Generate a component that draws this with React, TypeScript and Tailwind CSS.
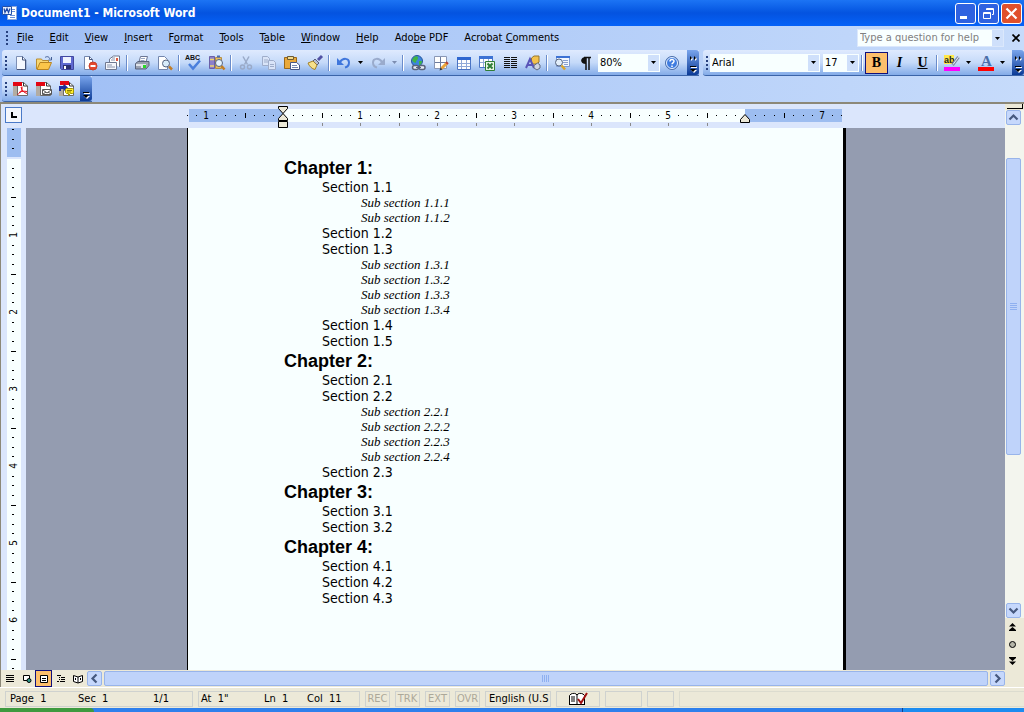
import type { ReactNode } from "react";

const menus = [
    ["", "F", "ile"],
    ["", "E", "dit"],
    ["", "V", "iew"],
    ["", "I", "nsert"],
    ["F", "o", "rmat"],
    ["", "T", "ools"],
    ["T", "a", "ble"],
    ["", "W", "indow"],
    ["", "H", "elp"],
    ["Ado", "b", "e PDF"],
    ["Acrobat ", "C", "omments"],
];

const outline = [
    {
        title: "Chapter 1:",
        sections: [
            { title: "Section 1.1", subs: ["1.1.1", "1.1.2"] },
            { title: "Section 1.2", subs: [] },
            { title: "Section 1.3", subs: ["1.3.1", "1.3.2", "1.3.3", "1.3.4"] },
            { title: "Section 1.4", subs: [] },
            { title: "Section 1.5", subs: [] },
        ],
    },
    {
        title: "Chapter 2:",
        sections: [
            { title: "Section 2.1", subs: [] },
            { title: "Section 2.2", subs: ["2.2.1", "2.2.2", "2.2.3", "2.2.4"] },
            { title: "Section 2.3", subs: [] },
        ],
    },
    {
        title: "Chapter 3:",
        sections: [
            { title: "Section 3.1", subs: [] },
            { title: "Section 3.2", subs: [] },
        ],
    },
    {
        title: "Chapter 4:",
        sections: [
            { title: "Section 4.1", subs: [] },
            { title: "Section 4.2", subs: [] },
            { title: "Section 4.3", subs: [] },
        ],
    },
];

/* ---------- icons ---------- */

const Icon = ({ children }: { children: ReactNode }) => (
    <svg viewBox="0 0 16 16" className="w-4 h-4 shrink-0 overflow-visible" fill="none">
        {children}
    </svg>
);

const pdfPage = (
    <>
        <path d="M0 5h12v10H0z" fill="#b2aca3" />
        <path d="M4.5 1.5h6l4 3.5v9.5h-10z" fill="#fff" stroke="#6b6b6b" />
        <path d="M10.5 1.5V5h4" stroke="#333" />
    </>
);

const icons = {
    New: (
        <>
            <path d="M3.5 1.5h6L13 5v9.5H3.5z" fill="#f4f8ff" stroke="#7d8fb5" />
            <path d="M9.5 1.5V5H13" stroke="#44557c" />
            <path d="M12.5 5v9.5H4" stroke="#44557c" />
        </>
    ),
    Open: (
        <>
            <path d="M.5 14V4h5l1 1.5h6V8" fill="#f7d774" stroke="#b98d30" />
            <path d="M1 14.5 4 7.5h11.5l-3 7z" fill="#fbc64a" stroke="#b98522" />
            <path d="M9 2.5c2-1.5 4-1 5 1.5M15.5 2v3h-3" stroke="#445f95" />
        </>
    ),
    Save: (
        <>
            <path d="M1.5 1.5h13v13h-12l-1-1z" fill="#5f69d0" stroke="#4147a0" />
            <path d="M4 2h8v6H4z" fill="#eef2ff" />
            <path d="M4 10h8v4H4z" fill="#2c2f70" />
            <path d="M5 11h2v3H5z" fill="#fff" />
        </>
    ),
    Permission: (
        <>
            <path d="M2.5 1.5h5l3 3v10h-8z" fill="#fff" stroke="#7386ad" />
            <path d="M7.500 1.5v3h3" stroke="#44557c" />
            <circle cx="11" cy="11" r="4" fill="#e5482d" stroke="#c8402a" />
            <path d="M8.5 10h5v2h-5z" fill="#fff" />
        </>
    ),
    "E-mail": (
        <>
            <path d="M4.500 7V4l4-3h6v11" fill="#fff" stroke="#6f7890" />
            <path d="M11 3h2v3h-2z" fill="#e0563c" />
            <path d="M6 5h4M7 3h3" stroke="#8a94ac" />
            <path d="M.5 7.5h11v7H.5z" fill="#f5f7fc" stroke="#6f7890" />
            <path d="M2 10h5M2 12h8" stroke="#8a94ac" />
        </>
    ),
    Print: (
        <>
            <path d="M5 7l1.5-5.5h7L12 7" fill="#fff" stroke="#6b7694" />
            <path d="M7 3.5h4M6.500 5.500h4" stroke="#9aa6c4" />
            <path d="M1.5 8.5 4 6.5h11v4l-3 3.500H1.500z" fill="#9aa2b2" stroke="#59637c" />
            <path d="M2 9h10v4H2z" fill="#dfe3ea" />
            <path d="M9 10h3v3H9z" fill="#28d828" />
            <path d="M2 12h5" stroke="#59637c" />
        </>
    ),
    "Print Preview": (
        <>
            <path d="M1.5 1.5h6l3 3v10h-9z" fill="#fff" stroke="#7386ad" />
            <circle cx="9" cy="8.5" r="3.5" fill="#d8ecfa" stroke="#56647f" />
            <path d="m12 11.5 3 3" stroke="#c27d27" strokeWidth="2.500" />
        </>
    ),
    Spelling: (
        <>
            <text x="-1" y="5" fontSize="7" fontWeight="700" fill="#111" fontFamily="Liberation Sans, sans-serif">ABC</text>
            <path d="m3 9 4 4.5L14 5.500" stroke="#4a7fdc" strokeWidth="2.500" />
        </>
    ),
    Research: (
        <>
            <path d="M.5 1.5h5v12h-5z" fill="#8c80cc" stroke="#6a60a8" />
            <path d="M1 4.500h4M1 11h4" stroke="#efd56d" strokeWidth="1.500" />
            <path d="M6.5 2.5h6v11h-6z" fill="#e7bd62" stroke="#b58f45" />
            <path d="M8 1.500h3" stroke="#4a6cb4" strokeWidth="2" />
            <circle cx="10" cy="8" r="3.500" fill="#e6f3fc" stroke="#56647f" />
            <path d="m12.500 11 3 3.500" stroke="#c27d27" strokeWidth="2.500" />
        </>
    ),
    Cut: (
        <>
            <path d="m5 1.500 4.500 8M11 1.500l-4.500 8" stroke="#9aaac8" strokeWidth="1.500" />
            <circle cx="4.500" cy="12" r="2" stroke="#9aaac8" strokeWidth="1.500" />
            <circle cx="11.500" cy="12" r="2" stroke="#9aaac8" strokeWidth="1.500" />
        </>
    ),
    Copy: (
        <>
            <path d="M1.500 1.500h5l2 2v7h-7z" fill="#d9e4f8" stroke="#9fadca" />
            <path d="M3 5h4M3 7h4" stroke="#9fadca" />
            <path d="M7.500 5.500h5l2 2v7h-7z" fill="#d9e4f8" stroke="#9fadca" />
            <path d="M9 9.500h4M9 11.500h4" stroke="#9fadca" />
        </>
    ),
    Paste: (
        <>
            <path d="M.5 2.500h12v11H.5z" fill="#eaa93a" stroke="#99671b" />
            <path d="M3.500 1.500h6v3h-6z" fill="#f6dc8a" stroke="#6b5a34" />
            <path d="M6.500 7.500h6l3 2.500v4.500h-9z" fill="#fff" stroke="#46598a" />
            <path d="M8 10.500h5M8 12.500h6" stroke="#7386ad" />
        </>
    ),
    "Format Painter": (
        <>
            <path d="m15 1-4 4" stroke="#5252a4" strokeWidth="3" />
            <path d="M8 4l4 4-2 2-4-4z" fill="#b7bccc" stroke="#575f80" />
            <path d="M6 6 1 8c1 3 4 6 7 6.500L10 10z" fill="#f6e08a" stroke="#a3812a" />
        </>
    ),
    Undo: (
        <>
            <path d="M4 7c3-4.500 9-4 9 .5 0 2.500-2 4.500-4 5" stroke="#3f76dc" strokeWidth="2" />
            <path d="M1 3v7h7z" fill="#3f76dc" />
        </>
    ),
    Redo: (
        <>
            <path d="M12 7c-3-4.500-9-4-9 .5 0 2.500 2 4.500 4 5" stroke="#9aabcc" strokeWidth="2" />
            <path d="M15 3v7H8z" fill="#9aabcc" />
        </>
    ),
    "Insert Hyperlink": (
        <>
            <circle cx="7" cy="6" r="5.500" fill="#3c86dc" stroke="#28569c" />
            <path d="M4 2c2-1 4-1 4 1S6 5 6 7 3 7 2 5zM9 6h3c0 2-1 4-3 4z" fill="#3fb544" />
            <rect x="2.500" y="10.500" width="6" height="4" rx="2" fill="#e8edf6" stroke="#59637c" strokeWidth="1.500" />
            <rect x="9" y="10.500" width="6" height="4" rx="2" fill="#e8edf6" stroke="#59637c" strokeWidth="1.500" />
            <path d="M6 12.500h5" stroke="#59637c" />
        </>
    ),
    "Tables and Borders": (
        <>
            <path d="M1.500 1.500h12v12h-12z" fill="#fff" stroke="#8a97b5" />
            <path d="M7.500 2v11M2 7.500h11" stroke="#6d7c9e" />
            <path d="m8.500 13.500 5.500-5.500" stroke="#e9a43b" strokeWidth="3" />
            <path d="m6.500 15.500 1-3 2 2z" fill="#333" />
            <path d="m13 7 2 2" stroke="#b63f32" strokeWidth="2" />
        </>
    ),
    "Insert Table": (
        <>
            <path d="M1.500 2.500h13v12h-13z" fill="#fff" stroke="#4b74c4" />
            <path d="M1 2h14v3H1z" fill="#2f66cf" />
            <path d="M5.500 5v9M10.500 5v9M2 8.500h12M2 11.500h12" stroke="#90a9d8" />
        </>
    ),
    "Insert Excel Worksheet": (
        <>
            <path d="M.500 1.500h13v11H.500z" fill="#fff" stroke="#4b74c4" />
            <path d="M0 1h14v3H0z" fill="#3d72d4" />
            <path d="M4.500 4v8M9.500 4v8M1 7.500h12" stroke="#90a9d8" />
            <path d="M6.500 6.500h9v9h-9z" fill="#e8f5e4" stroke="#2f7d36" />
            <path d="m8.500 8.500 5 5M13.500 8.500l-5 5" stroke="#2f7d36" strokeWidth="2" />
        </>
    ),
    Columns: (
        <path d="M2 2.500h6M9 2.500h6M2 4.500h6M9 4.500h6M2 6.500h6M9 6.500h6M2 8.500h6M9 8.500h6M2 10.500h6M9 10.500h6M2 12.500h6M9 12.500h6" stroke="#111" />
    ),
    Drawing: (
        <>
            <path d="M6.500 3 9 1h5v6l-2 2H6.500z" fill="#f3c24d" stroke="#97772c" />
            <path d="m1 13 4-9 4 9M3 10h4" stroke="#5a55b8" strokeWidth="2" />
            <path d="M9 10.500 12.500 8 15 10v3l-3 2-3-2z" fill="#cfd5e2" stroke="#5f6880" />
        </>
    ),
    "Document Map": (
        <>
            <path d="M2.500 1.500h13v10h-13z" fill="#f2f7ff" stroke="#7f9bd2" />
            <path d="M2 1h14v2H2z" fill="#3d72d4" />
            <path d="M9 5.500h5M9 7.500h5M10 9.500h4" stroke="#8aa0cf" />
            <circle cx="5" cy="7.500" r="3.500" fill="#e2eefb" stroke="#56647f" />
            <path d="m7.500 10.500 3.500 4" stroke="#d9a52e" strokeWidth="2.500" />
        </>
    ),
    "Show/Hide": (
        <>
            <path d="M7 2.500h7M9 2v13M12 2v13" stroke="#111" strokeWidth="1.500" />
            <path d="M9 2v7C2.500 9 2.500 2 9 2z" fill="#111" />
        </>
    ),
    Help: (
        <>
            <circle cx="8" cy="8" r="6.500" fill="#3f7ce0" stroke="#5070a8" />
            <circle cx="8" cy="8" r="5.500" stroke="#e9f2ff" />
            <path d="M6 6.500C6 4 10 4 10 6.300c0 1.500-2 1.500-2 3M8 10.500V12" stroke="#fff" strokeWidth="1.500" />
        </>
    ),
    "Convert to PDF": (
        <>
            {pdfPage}
            <path d="M0 1h9v4H0z" fill="#e30613" />
            <path d="M8 6c1 4 3 5.500 6 6.500M9 5.500c.5 4-2 6.500-4.500 8M6 11.500c3-1.500 5-1.500 8-1" stroke="#e30613" />
        </>
    ),
    "Convert to PDF and E-mail": (
        <>
            {pdfPage}
            <path d="M0 1h9v4H0z" fill="#e30613" />
            <path d="M6.500 8.500h9v5h-9z" fill="#fff" stroke="#555" />
            <path d="m7 9 4 3 4-3M7 13l3-2M15 13l-3-2" stroke="#555" />
        </>
    ),
    "Convert to PDF and Review": (
        <>
            {pdfPage}
            <path d="M1 0h9v4H1z" fill="#e30613" />
            <path d="M0 5h5V3l4 3.500L5 10V8H2v2H0z" fill="#1a2f9c" />
            <path d="M7.500 7.500h6l1 1v3l-1 1h-2l-2 2v-2h-2l-1-1v-3z" fill="#ffee2e" stroke="#a39600" />
            <path d="M8 9.500h5M8 11h4" stroke="#8d8100" />
        </>
    ),
    Highlight: (
        <>
            <path d="M0 0h10v9H0z" fill="#ffe84a" />
            <text x="0" y="8" fontSize="9" fontWeight="700" fill="#222" fontFamily="Liberation Sans, sans-serif">ab</text>
            <path d="m8.500 10 6-8" stroke="#7d89a5" strokeWidth="3" />
            <path d="m9 9.500 5.500-7.500" stroke="#e8edf8" />
            <path d="M0 12h16v4H0z" fill="#ff00ff" />
        </>
    ),
    "Font Color": (
        <>
            <text x="3" y="11" fontSize="15" fontWeight="700" fill="#4a6ea8" fontFamily="Liberation Serif, serif">A</text>
            <path d="M0 12h16v4H0z" fill="#ff0000" />
        </>
    ),
};

type IconName = keyof typeof icons;

const ToolButton = ({ name }: { name: IconName }) => (
    <button aria-label={name} className="w-[23px] h-[22px] flex items-center justify-center shrink-0">
        <Icon>{icons[name]}</Icon>
    </button>
);

const ToolGroup = ({ names }: { names: IconName[] }) => (
    <>
        {names.map((name) => (
            <ToolButton key={name} name={name} />
        ))}
    </>
);

const Down = ({ color = "#000" }: { color?: string }) => (
    <svg viewBox="0 0 5 3" className="w-[5px] h-[3px]">
        <path d="M0 0h5L2.500 3z" fill={color} />
    </svg>
);

const DownButton = ({ label, color }: { label: string; color?: string }) => (
    <button aria-label={label} className="w-[11px] h-[22px] flex items-center justify-center shrink-0">
        <Down color={color} />
    </button>
);

const Separator = () => (
    <div className="w-[6px] h-4 flex justify-center shrink-0">
        <div className="w-px bg-[#6a8ccb]" />
        <div className="w-px bg-white" />
    </div>
);

const Grip = () => (
    <div className="w-[7px] pl-px shrink-0 flex flex-col items-center gap-[2px]">
        {[0, 1, 2, 3].map((i) => (
            <span key={i} className="w-[2px] h-[2px] bg-[#27417f]" />
        ))}
    </div>
);

const Combo = ({ label, value, className }: { label: string; value: string; className: string }) => (
    <div className={`relative h-[18px] shrink-0 bg-[#f8ffff] ${className}`}>
        <select aria-label={label} defaultValue={value} className="w-full h-full pl-[2px] pr-3 appearance-none bg-transparent outline-none">
            <option>{value}</option>
        </select>
        <span className="absolute right-px top-px bottom-px w-[11px] bg-[#cfe0fb] flex items-center justify-center pointer-events-none">
            <Down />
        </span>
    </div>
);

const MoreButton = ({ chevrons = true }: { chevrons?: boolean }) => (
    <button aria-label="Toolbar Options" className="w-3 self-stretch shrink-0 rounded-r-[3px] bg-gradient-to-b from-[#7aa5ec] to-[#0a3a96] flex flex-col items-center justify-end pb-[2px]">
        <svg viewBox="0 0 9 18" className="w-[9px] h-[18px]" fill="none">
            {chevrons && <path d="M2 2v4l2-2zM6 2v4l2-2z" fill="#fff" />}
            {chevrons && <path d="M1 1v4l2-2zM5 1v4l2-2z" fill="#000" />}
            <path d="M2 12.500h6" stroke="#fff" />
            <path d="M1 11.500h6" stroke="#000" />
            <path d="M2 15h6l-3 3z" fill="#fff" />
            <path d="M1 14h6l-3 3z" fill="#000" />
        </svg>
    </button>
);

const toolbarBg = "bg-gradient-to-b from-[#dfeafe] via-[#c5daf9] to-[#83abe8] border-b border-[#3b64a8]";

/* ---------- window chrome ---------- */

const TitleBar = () => (
    <header className="h-[26px] shrink-0 flex items-center px-[2px] bg-gradient-to-b from-[#1c74f4] via-[#0453e0] to-[#0562f8]">
        <svg viewBox="0 0 16 16" className="w-4 h-4" fill="none">
            <path d="M5.500 1.500h9v13h-9z" fill="#fff" stroke="#8ba6dc" />
            <path d="M10 4.500h3M10 6.500h3M8 10.500h5M8 12.500h5" stroke="#6a8fd8" />
            <path d="M.500 1.500h9v8h-9z" fill="#e9f1ff" stroke="#2450a8" />
            <path d="m2 3.500 1 4 2-4 1.500 4L8 3.500" stroke="#1c47a8" strokeWidth="1.200" />
        </svg>
        <h1 className="ml-[3px] flex-1 text-[12px] font-bold text-white font-['DejaVu_Sans_Condensed','DejaVu_Sans',sans-serif]">Document1 - Microsoft Word</h1>
        <div className="flex gap-[2px]">
            <button aria-label="Minimize" className="w-[21px] h-[21px] rounded-[3px] border border-white bg-[#2f62e0]">
                <svg viewBox="0 0 19 19" fill="none"><path d="M4 13.500h7" stroke="#fff" strokeWidth="3" /></svg>
            </button>
            <button aria-label="Restore" className="w-[21px] h-[21px] rounded-[3px] border border-white bg-[#2f62e0]">
                <svg viewBox="0 0 19 19" fill="none" stroke="#fff">
                    <path d="M7.500 6V4.500h7v6H13M7 5.500h8" />
                    <path d="M4.500 8.500h7v6h-7zM4 9.500h8" />
                </svg>
            </button>
            <button aria-label="Close" className="w-[21px] h-[21px] rounded-[3px] border border-white bg-[#e0502c]">
                <svg viewBox="0 0 19 19" fill="none"><path d="m4.500 4.500 10 10M14.500 4.500l-10 10" stroke="#fff" strokeWidth="2.200" /></svg>
            </button>
        </div>
    </header>
);

const MenuBar = () => (
    <nav className="h-6 shrink-0 flex items-center pl-[3px] pr-px">
        <Grip />
        <div className="flex pl-px">
            {menus.map(([before, key, after]) => (
                <button key={before + key + after} className="pl-[6px] pr-[10px] whitespace-pre tabular-nums">
                    {before}
                    <u className="underline-offset-1">{key}</u>
                    {after}
                </button>
            ))}
        </div>
        <div className="ml-auto w-[147px] h-[18px] flex bg-[#f8ffff] border border-[#dbe8fc]">
            <input aria-label="Help search" placeholder="Type a question for help" className="min-w-0 flex-1 pl-[2px] outline-none placeholder:text-[#808080]" />
            <button aria-label="Recent questions" className="w-[11px] bg-[#cfe0fb] flex items-center justify-center">
                <Down />
            </button>
        </div>
        <button aria-label="Close Window" className="w-[15px] ml-1 flex items-center justify-center">
            <svg viewBox="0 0 8 8" className="w-2 h-2"><path d="m.5.5 7 7M7.500.5l-7 7" stroke="#000" strokeWidth="1.700" /></svg>
        </button>
    </nav>
);

const Toolbars = () => (
    <div className="shrink-0 flex flex-col">
        <div className="h-[26px] flex">
            <div className={`ml-[2px] flex items-center rounded-l-[3px] ${toolbarBg}`}>
                <Grip />
                <ToolGroup names={["New", "Open", "Save", "Permission", "E-mail"]} />
                <Separator />
                <ToolGroup names={["Print", "Print Preview"]} />
                <Separator />
                <ToolGroup names={["Spelling", "Research"]} />
                <Separator />
                <ToolGroup names={["Cut", "Copy", "Paste", "Format Painter"]} />
                <Separator />
                <ToolButton name="Undo" />
                <DownButton label="Undo list" />
                <ToolButton name="Redo" />
                <DownButton label="Redo list" color="#7c8db0" />
                <Separator />
                <ToolGroup names={["Insert Hyperlink", "Tables and Borders", "Insert Table", "Insert Excel Worksheet", "Columns", "Drawing"]} />
                <Separator />
                <ToolGroup names={["Document Map", "Show/Hide"]} />
                <Combo label="Zoom" value="80%" className="w-[62px] ml-[2px]" />
                <ToolButton name="Help" />
                <div className="ml-1 self-stretch flex">
                    <MoreButton />
                </div>
            </div>
            <div className={`ml-1 flex-1 flex items-center rounded-l-[3px] ${toolbarBg}`}>
                <Grip />
                <Combo label="Font" value="Arial" className="w-[110px]" />
                <Combo label="Font Size" value="17" className="w-9 ml-[3px]" />
                <Separator />
                <button aria-label="Bold" aria-pressed="true" className="w-[23px] h-[22px] border border-[#10107c] bg-[#fdbf6c] font-['Liberation_Serif',serif] text-[14px] font-bold">B</button>
                <button aria-label="Italic" className="w-[23px] h-[22px] font-['Liberation_Serif',serif] text-[14px] font-bold italic">I</button>
                <button aria-label="Underline" className="w-[23px] h-[22px] font-['Liberation_Serif',serif] text-[14px] font-bold underline">U</button>
                <Separator />
                <ToolButton name="Highlight" />
                <DownButton label="Highlight colors" />
                <ToolButton name="Font Color" />
                <DownButton label="Font colors" />
                <div className="ml-auto self-stretch flex">
                    <MoreButton />
                </div>
            </div>
        </div>
        <div className="h-[26px] flex">
            <div className={`ml-[2px] flex items-center rounded-l-[3px] ${toolbarBg}`}>
                <Grip />
                <ToolGroup names={["Convert to PDF", "Convert to PDF and E-mail", "Convert to PDF and Review"]} />
                <div className="ml-[2px] self-stretch flex">
                    <MoreButton chevrons={false} />
                </div>
            </div>
        </div>
    </div>
);

/* ---------- rulers ---------- */

const INCH = 77;

// eighth-inch marks, with a longer mark on every half inch
const marks = (from: number, to: number) => {
    const list: { at: number; half: boolean }[] = [];
    for (let i = from; i <= to; i++) {
        if (i % 8 !== 0) list.push({ at: Math.round((i * INCH) / 8), half: i % 4 === 0 });
    }
    return list;
};

const HorizontalRuler = () => (
    <svg className="w-[658px] h-[24px] shrink-0 overflow-visible" viewBox="-96 0 658 24" fontSize="10" textAnchor="middle" fontFamily="DejaVu Sans Condensed, sans-serif">
        <rect x="-94" y="5" width="653" height="13" fill="#9dbdf0" />
        <rect x="0" y="5" width="462" height="13" fill="#f8ffff" />
        {marks(-10, 58).map(({ at, half }) => (
            <rect key={at} x={at} y={half ? 9 : 11} width="1" height={half ? 5 : 1} fill="#000" />
        ))}
        {marks(1, 47).filter(({ half }) => half).map(({ at }) => (
            <rect key={at} x={at} y="19" width="1" height="3" fill="#8a8a8a" />
        ))}
        {[1, 2, 3, 4, 5].map((n) => (
            <rect key={n} x={n * INCH} y="19" width="1" height="3" fill="#8a8a8a" />
        ))}
        <text x={-INCH} y="15">1</text>
        {[1, 2, 3, 4, 5, 7].map((n) => (
            <text key={n} x={n * INCH} y="15">{n}</text>
        ))}
        <path d="M-4.500 2.500h9v2L0 9.500l4.500 5v2h-9v-2L0 9.500l-4.500-5zM-4.500 17.500h9v6h-9z" fill="#ece9d8" stroke="#000" />
        <path d="M457.500 18.500v-3l4.500-5 4.500 5v3z" fill="#ece9d8" stroke="#000" />
    </svg>
);

const VerticalRuler = () => (
    <div className="w-[26px] shrink-0 overflow-hidden border-l border-[#8c8878] bg-[#dbe6fc]">
        <svg className="w-[25px] h-[1200px]" viewBox="1 -30 25 1200" fontSize="10" textAnchor="middle" fontFamily="DejaVu Sans Condensed, sans-serif">
            <rect x="7" y="-30" width="14" height="29" fill="#9dbdf0" />
            <rect x="7" y="1" width="14" height="1170" fill="#f8ffff" />
            {marks(-3, 110).map(({ at, half }) => (
                <rect key={at} x={half ? 11 : 12} y={at} width={half ? 5 : 2} height="1" fill="#000" />
            ))}
            {[1, 2, 3, 4, 5, 6].map((n) => (
                <text key={n} transform={`translate(17 ${n * INCH}) rotate(-90)`}>{n}</text>
            ))}
        </svg>
    </div>
);

/* ---------- document ---------- */

const DocumentPage = () => (
    <main className="w-[659px] border-l border-r-[3px] border-black bg-[#f8ffff] pt-[29px] pl-24 text-black overflow-hidden">
        {outline.map((chapter) => (
            <section key={chapter.title} className="pb-px">
                <h2 className="text-[18px] leading-[22px] font-bold font-['Liberation_Sans',Arial,sans-serif]">{chapter.title}</h2>
                {chapter.sections.map((section) => (
                    <div key={section.title} className="pl-[38px]">
                        <h3 className="text-[14px] leading-4">{section.title}</h3>
                        {section.subs.map((sub) => (
                            <p key={sub} className="pl-[39px] text-[13px] leading-[15px] italic font-['Liberation_Serif','Times_New_Roman',serif]">
                                Sub section {sub}
                            </p>
                        ))}
                    </div>
                ))}
            </section>
        ))}
    </main>
);

/* ---------- scroll bars ---------- */

const arrows = {
    up: "m2.500 8.500 4-4 4 4",
    down: "m2.500 4.500 4 4 4-4",
    left: "m8.500 2.500-4 4 4 4",
    right: "m4.500 2.500 4 4-4 4",
};

const ScrollButton = ({ dir }: { dir: keyof typeof arrows }) => (
    <button aria-label={`Scroll ${dir}`} className="w-[15px] h-[15px] shrink-0 rounded-[2px] border border-[#98b4ea] bg-[#c6d8fc]">
        <svg viewBox="0 0 13 13" fill="none"><path d={arrows[dir]} stroke="#46597f" strokeWidth="2.200" /></svg>
    </button>
);

const VerticalScroll = () => (
    <div className="w-[19px] shrink-0 flex flex-col items-center bg-[#ece9d8]">
        <div className="w-4 h-[5px] shrink-0 bg-[#ece9d8] border-r border-b border-black" />
        <div className="flex-1 w-full mt-px pr-[2px] flex flex-col items-center bg-[#f3f5ee]">
            <ScrollButton dir="up" />
            <div className="flex-1 w-full flex flex-col items-center">
                <div className="h-[7%]" />
                <div className="w-[15px] h-[62%] rounded-[2px] border border-[#98b4ea] bg-[#bfd3fa] flex items-center justify-center">
                    <svg viewBox="0 0 7 8" className="w-[7px] h-2"><path d="M0 .5h7M0 2.500h7M0 4.500h7M0 6.500h7" stroke="#8fb0f0" /></svg>
                </div>
            </div>
            <ScrollButton dir="down" />
        </div>
        <div className="h-[69px] pr-1 pt-[2px] shrink-0 flex flex-col items-center gap-[3px]">
            <button aria-label="Previous Page" className="h-[14px] flex items-center">
                <svg viewBox="0 0 7 8" className="w-[7px] h-2"><path d="M0 3.500 3.500 0 7 3.500zM0 7l3.500-3L7 7v1H0z" fill="#000" /></svg>
            </button>
            <button aria-label="Select Browse Object" className="h-[14px] flex items-center">
                <span className="w-[7px] h-[7px] rounded-full border border-black bg-[#b5b5a8]" />
            </button>
            <button aria-label="Next Page" className="h-[14px] flex items-center">
                <svg viewBox="0 0 7 8" className="w-[7px] h-2"><path d="M0 4.500 3.500 8 7 4.500zM0 1l3.500 3L7 1V0H0z" fill="#000" /></svg>
            </button>
        </div>
    </div>
);

const views: { name: string; active?: boolean; art: ReactNode }[] = [
    { name: "Normal View", art: <path d="M1 1.500h8M1 3.500h8M1 5.500h8M1 7.500h8" stroke="#000" /> },
    { name: "Web Layout View", art: <><path d="M1.500 1.500h6v5h-6z" fill="#fff" stroke="#000" /><circle cx="7" cy="6.500" r="2" fill="#2f9a8c" stroke="#000" /></> },
    { name: "Print Layout View", active: true, art: <><path d="M1.500 1.500h7v7h-7z" fill="#fff" stroke="#000" /><path d="M3 4.500h4M3 6.500h4" stroke="#000" /></> },
    { name: "Outline View", art: <path d="M1 1.500h4M3 3.500h1M5 3.500h4M3 5.500h1M5 5.500h4M1 7.500h2M4 7.500h5" stroke="#000" /> },
    { name: "Reading Layout", art: <path d="M.5 1.500 5 3l4.500-1.500v6L5 9 .5 7.500zM5 3v6M2.500 4v2M7.500 4v2" fill="#fff" stroke="#000" /> },
];

const BottomScroll = () => (
    <div className="h-[17px] shrink-0 flex items-center bg-[#ece9d8] border-l border-[#8c8878]">
        <div className="flex pr-px">
            {views.map((view) => (
                <button
                    key={view.name}
                    aria-label={view.name}
                    className={`w-[17px] h-[17px] flex items-center justify-center border ${view.active ? "border-[#10107c] bg-[#fdbf6c]" : "border-transparent"}`}
                >
                    <svg viewBox="0 0 10 10" className="w-[10px] h-[10px] shrink-0" fill="none">{view.art}</svg>
                </button>
            ))}
        </div>
        <ScrollButton dir="left" />
        <div className="flex-1 h-[15px] mx-[2px] rounded-[2px] border border-[#98b4ea] bg-[#bfd3fa] flex items-center justify-center">
            <svg viewBox="0 0 8 7" className="w-2 h-[7px]"><path d="M.5 0v7M2.500 0v7M4.500 0v7M6.500 0v7" stroke="#8fb0f0" /></svg>
        </div>
        <ScrollButton dir="right" />
    </div>
);

/* ---------- status bar ---------- */

const panel = "h-[16px] border border-[#cfd2cf] flex items-center whitespace-pre shrink-0";

const StatusBar = () => (
    <footer className="h-[21px] shrink-0 flex items-center gap-[5px] pt-[2px] pl-[5px] bg-[#ece9d8] border-t border-white">
        <div className={`${panel} w-[188px] pl-1`}>
            <span className="w-[68px]">Page  1</span>
            <span className="w-[75px]">Sec  1</span>
            <span>1/1</span>
        </div>
        <div className={`${panel} w-[162px] pl-[2px]`}>
            <span className="w-[63px]">At  1"</span>
            <span className="w-[43px]">Ln  1</span>
            <span>Col  11</span>
        </div>
        {["REC", "TRK", "EXT", "OVR"].map((mode) => (
            <button key={mode} className={`${panel} w-[25px] justify-center text-[#aca899]`}>{mode}</button>
        ))}
        <div className={`${panel} w-[66px] pl-[3px]`}>English (U.S</div>
        <div className={`${panel} w-[44px] justify-center`}>
            <svg viewBox="0 0 20 14" className="w-5 h-[14px]" fill="none">
                <path d="M1.500 3.500 3 2c2-1 5-1 6 1 1-2 4-2 6-1l1.500 1.500v9H1.500z" fill="#fff" stroke="#000" />
                <path d="M9 3v9M1 12.500h16M3 5h4M3 7h4M3 9h4" stroke="#000" />
                <path d="m10 7 3 4 6-10" stroke="#a01010" strokeWidth="2" />
            </svg>
        </div>
        <div className={`${panel} w-[37px]`} />
        <div className={`${panel} w-[27px]`} />
        <div className="h-[16px] flex-1 border border-r-0 border-[#dcdccf]" />
    </footer>
);

const App = () => (
    <div className="h-screen flex flex-col overflow-hidden text-[11px] leading-[14px] text-black font-['DejaVu_Sans_Condensed','DejaVu_Sans',sans-serif] bg-gradient-to-r from-[#9ebef5] to-[#c6dbfb]">
        <TitleBar />
        <MenuBar />
        <Toolbars />
        <div className="flex-1 min-h-0 flex border-t-2 border-[#8c8878]">
            <div className="flex-1 min-w-0 flex flex-col">
                <div className="h-6 shrink-0 flex bg-[#dbe6fc] border-l border-[#8c8878]">
                    <button aria-label="Tab Stop" className="ml-1 mt-[3px] w-[17px] h-4 shrink-0 border border-[#4a7ac8] bg-[#f4f6fb] flex items-center justify-center">
                        <svg viewBox="0 0 6 6" className="w-[6px] h-[6px]" fill="none"><path d="M1 0v5h5" stroke="#000" strokeWidth="2" /></svg>
                    </button>
                    <div className="flex-1 flex justify-center pl-[5px]">
                        <HorizontalRuler />
                    </div>
                </div>
                <div className="flex-1 min-h-0 flex">
                    <VerticalRuler />
                    <div className="flex-1 flex justify-center pl-[2px] bg-[#949cb0]">
                        <DocumentPage />
                    </div>
                </div>
                <BottomScroll />
            </div>
            <VerticalScroll />
        </div>
        <StatusBar />
        <div className="h-1 shrink-0 flex bg-[#2f80ec]">
            <div className="w-[94px] rounded-tr-[4px] bg-[#3f9a3f]" />
            <div className="flex-1" />
            <div className="w-[122px] border-l border-[#10408c] bg-[#1c8cf0]" />
        </div>
    </div>
);

export default App;
